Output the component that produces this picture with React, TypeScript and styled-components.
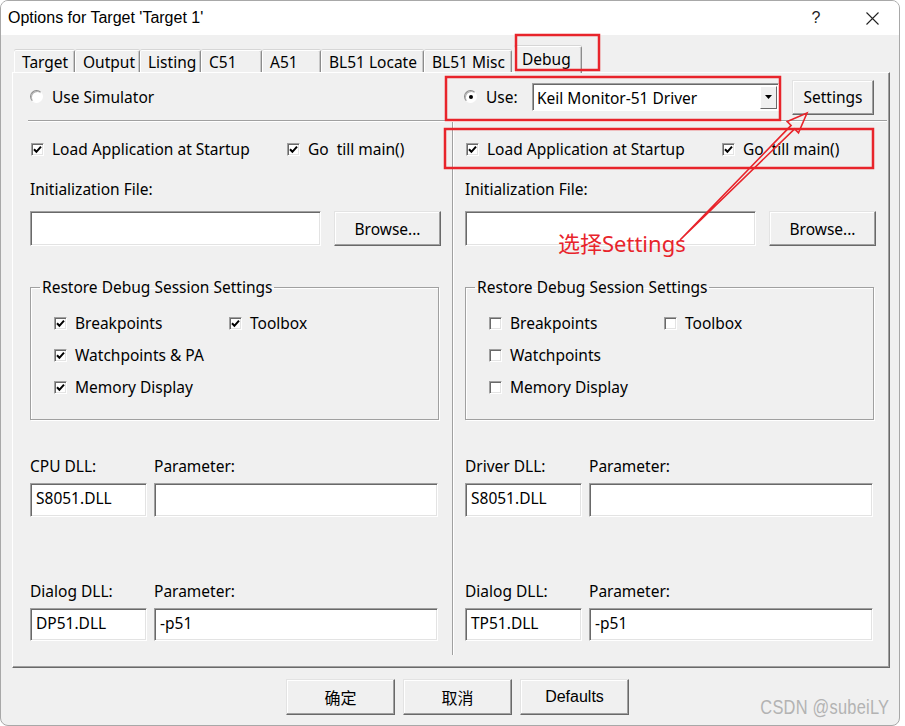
import React from "react";
import styled, { createGlobalStyle } from "styled-components";

const red = "#e8242b";

const GlobalStyle = createGlobalStyle`
  html, body { margin: 0; padding: 0; background: #ffffff; }
  body {
    font-family: "Noto Sans", "Noto Sans CJK SC", sans-serif;
    font-size: 15.5px;
    color: #000;
  }
  * { box-sizing: border-box; }
`;

const Window = styled.div`
  position: relative;
  width: 900px;
  height: 726px;
  border: 1px solid #a8a8a8;
  border-radius: 8px;
  overflow: hidden;
  background: #f0f0f0;
  display: flex;
  flex-direction: column;
`;

const TitleBar = styled.div`
  height: 34px;
  flex-shrink: 0;
  background: #fff;
  display: flex;
  align-items: center;
  padding: 0 4px 0 7px;
`;

const Title = styled.span`
  flex: 1;
  font-family: "Liberation Sans", sans-serif;
  font-size: 16px;
`;

const TitleButton = styled.span`
  width: 46px;
  height: 34px;
  display: flex;
  align-items: center;
  justify-content: center;
  font-family: "Liberation Sans", sans-serif;
  font-size: 16px;
  color: #222;
  & + & { margin-left: 10px; }
`;

const TabStrip = styled.div`
  height: 26px;
  margin: 11px 0 0 13px;
  display: flex;
  align-items: flex-end;
  position: relative;
  z-index: 1;
`;

const Tab = styled.div<{ $w: number; $active?: boolean }>`
  width: ${(p) => p.$w}px;
  height: ${(p) => (p.$active ? 27 : 22)}px;
  margin-left: ${(p) => (p.$active ? 2 : 0)}px;
  margin-bottom: ${(p) => (p.$active ? -1 : 0)}px;
  padding: ${(p) => (p.$active ? "0 0 3px 7px" : "0 0 0 7px")};
  display: flex;
  align-items: center;
  background: #f0f0f0;
  border-style: solid;
  border-width: 1px 1px 0 1px;
  border-color: #fff #8c8c8c transparent #fff;
  box-shadow: 0 -1px 0 #d6d6d6, inset -1px 0 0 #c9c9c9;
  border-radius: 2px 2px 0 0;
  white-space: nowrap;
`;

const Panel = styled.div`
  margin-left: 11px;
  width: 878px;
  height: 596px;
  flex-shrink: 0;
  border: 1px solid;
  border-color: #fff #696969 #696969 #fff;
  box-shadow: inset -1px -1px 0 #a0a0a0;
  padding: 0 15px 0 17px;
  display: flex;
  flex-direction: column;
`;

const Halves = styled.div`
  display: grid;
  grid-template-columns: 410px 25px 409px;
`;

const TopRow = styled(Halves)`
  height: 47px;
  align-items: center;
`;

const Separator = styled.div`
  height: 2px;
  margin: 0 -13px 0 -2px;
  border-top: 1px solid #a0a0a0;
  border-bottom: 1px solid #fff;
`;

const Columns = styled(Halves)`
  flex: 1;
`;

const Divider = styled.div`
  width: 2px;
  margin: 0 auto 12px;
  border-left: 1px solid #a0a0a0;
  border-right: 1px solid #fff;
`;

const Column = styled.div`
  display: flex;
  flex-direction: column;
`;

const Line = styled.div<{ $top: number }>`
  margin-top: ${(p) => p.$top}px;
  height: 20px;
  display: flex;
  align-items: center;
  white-space: pre;
`;

const CheckRow = styled(Line)`
  display: grid;
  grid-template-columns: 256px auto;
`;

const CheckLabel = styled.label`
  display: flex;
  align-items: center;
  gap: 8px;
  white-space: pre;
  margin-left: 1px;
`;

const CheckBox = styled.span`
  width: 13px;
  height: 13px;
  flex-shrink: 0;
  background: #fff;
  border: 1px solid;
  border-color: #a0a0a0 #fff #fff #a0a0a0;
  box-shadow: inset 1px 1px 0 #696969, inset -1px -1px 0 #e3e3e3;
  display: flex;
  align-items: center;
  justify-content: center;
`;

const RadioLabel = styled.label`
  display: flex;
  align-items: center;
  gap: 9px;
`;

const RadioDot = styled.span<{ $on?: boolean }>`
  width: 13px;
  height: 13px;
  border-radius: 50%;
  background: #fff;
  border: 1px solid;
  border-color: #8a8a8a #fff #fff #8a8a8a;
  box-shadow: inset 1px 1px 0 #b5b5b5;
  display: flex;
  align-items: center;
  justify-content: center;
  &::after {
    content: "";
    width: 4px;
    height: 4px;
    border-radius: 50%;
    background: ${(p) => (p.$on ? "#000" : "transparent")};
  }
`;

const UseRow = styled.div`
  display: flex;
  align-items: center;
  margin-left: -1px;
`;

const UseText = styled.span`
  width: 46px;
`;

const Combo = styled.div`
  width: 247px;
  height: 28px;
  background: #fff;
  border: 1px solid;
  border-color: #a0a0a0 #fff #fff #a0a0a0;
  box-shadow: inset 1px 1px 0 #696969;
  display: flex;
  align-items: center;
  padding: 2px 1px 1px 4px;
`;

const ComboText = styled.span`
  flex: 1;
  padding-top: 1px;
`;

const ComboArrow = styled.span`
  width: 17px;
  height: 100%;
  background: #f0f0f0;
  border: 1px solid;
  border-color: #fff #696969 #696969 #fff;
  display: flex;
  align-items: center;
  justify-content: center;
`;

const Button = styled.button<{ $w: number; $h: number }>`
  width: ${(p) => p.$w}px;
  height: ${(p) => p.$h}px;
  flex-shrink: 0;
  padding: 0;
  background: #f0f0f0;
  color: #000;
  font: inherit;
  border: 1px solid;
  border-color: #e3e3e3 #696969 #696969 #e3e3e3;
  box-shadow: inset -1px -1px 0 #a0a0a0, inset 1px 1px 0 #fff;
`;

const SettingsButton = styled(Button)`
  margin-left: 13px;
  margin-top: 1px;
`;

const TextBox = styled.div<{ $h: number }>`
  height: ${(p) => p.$h}px;
  background: #fff;
  border: 1px solid;
  border-color: #a0a0a0 #fff #fff #a0a0a0;
  box-shadow: inset 1px 1px 0 #696969, inset -1px -1px 0 #e3e3e3;
  padding: 3px 5px;
  white-space: nowrap;
`;

const BrowseRow = styled.div`
  margin-top: 12px;
  display: grid;
  grid-template-columns: 291px 107px;
  column-gap: 13px;
`;

const Group = styled.fieldset`
  margin: 31px 0 0;
  padding: 0;
  width: 409px;
  height: 143px;
  border: 1px solid #a0a0a0;
  box-shadow: 1px 1px 0 #fff, inset 1px 1px 0 #fff;
`;

const Legend = styled.legend`
  margin-left: 9px;
  padding: 0 2px;
  line-height: 20px;
`;

const GroupGrid = styled.div`
  display: grid;
  grid-template-columns: 175px auto;
  grid-auto-rows: 20px;
  row-gap: 12px;
  padding: 16px 0 0 22px;
`;

const DllGrid = styled.div<{ $top: number }>`
  margin-top: ${(p) => p.$top}px;
  display: grid;
  grid-template-columns: 117px 284px;
  grid-template-rows: 20px auto;
  column-gap: 7px;
  row-gap: 7px;
`;

const Label = styled.span`
  line-height: 20px;
  white-space: nowrap;
`;

const ButtonBar = styled.div`
  margin-top: 11px;
  padding-left: 15px;
  display: flex;
  justify-content: center;
  gap: 8px;
  font-family: "Liberation Sans", "Noto Sans CJK SC", sans-serif;
  font-size: 16px;
`;

const Overlay = styled.svg`
  position: absolute;
  left: -1px;
  top: -1px;
  pointer-events: none;
  z-index: 5;
`;

const Note = styled.span`
  position: absolute;
  left: 557px;
  top: 228px;
  color: ${red};
  font-family: "Noto Sans", "Noto Sans CJK SC", sans-serif;
  font-size: 22px;
  line-height: 28px;
  z-index: 6;
`;

const Watermark = styled.span`
  position: absolute;
  right: 10px;
  bottom: 6px;
  color: #b3b3b3;
  font-family: "Liberation Sans", sans-serif;
  font-size: 20px;
  transform: scaleX(0.82);
  transform-origin: right center;
  letter-spacing: 0.3px;
  z-index: 6;
`;

const tabs = [
  { label: "Target", w: 61 },
  { label: "Output", w: 65 },
  { label: "Listing", w: 61 },
  { label: "C51", w: 61 },
  { label: "A51", w: 59 },
  { label: "BL51 Locate", w: 103 },
  { label: "BL51 Misc", w: 88 },
  { label: "Debug", w: 68, active: true },
];

const Tick = () => (
  <svg width="9" height="9" viewBox="0 0 9 9">
    <path d="M1 4.3 L3.4 6.8 L8 1.6" fill="none" stroke="#000" strokeWidth="2" />
  </svg>
);

function Check({ checked, label }: { checked?: boolean; label: string }) {
  return (
    <CheckLabel>
      <CheckBox>{checked && <Tick />}</CheckBox>
      <span>{label}</span>
    </CheckLabel>
  );
}

type Side = {
  restore: boolean;
  watch: string;
  dllLabel: string;
  dll: string;
  dialogDll: string;
};

function DebugColumn({ side }: { side: Side }) {
  return (
    <Column>
      <CheckRow $top={16}>
        <Check checked label="Load Application at Startup" />
        <Check checked label="Go  till main()" />
      </CheckRow>
      <Line $top={21}>Initialization File:</Line>
      <BrowseRow>
        <TextBox $h={35} />
        <Button $w={107} $h={35}>Browse...</Button>
      </BrowseRow>
      <Group>
        <Legend>Restore Debug Session Settings</Legend>
        <GroupGrid>
          <Check checked={side.restore} label="Breakpoints" />
          <Check checked={side.restore} label="Toolbox" />
          <Check checked={side.restore} label={side.watch} />
          <span />
          <Check checked={side.restore} label="Memory Display" />
        </GroupGrid>
      </Group>
      <DllGrid $top={36}>
        <Label>{side.dllLabel}</Label>
        <Label>Parameter:</Label>
        <TextBox $h={34}>{side.dll}</TextBox>
        <TextBox $h={34} />
      </DllGrid>
      <DllGrid $top={64}>
        <Label>Dialog DLL:</Label>
        <Label>Parameter:</Label>
        <TextBox $h={33}>{side.dialogDll}</TextBox>
        <TextBox $h={33}>-p51</TextBox>
      </DllGrid>
    </Column>
  );
}

const simulator: Side = {
  restore: true,
  watch: "Watchpoints & PA",
  dllLabel: "CPU DLL:",
  dll: "S8051.DLL",
  dialogDll: "DP51.DLL",
};

const monitor: Side = {
  restore: false,
  watch: "Watchpoints",
  dllLabel: "Driver DLL:",
  dll: "S8051.DLL",
  dialogDll: "TP51.DLL",
};

export default function App() {
  return (
    <>
      <GlobalStyle />
      <Window>
        <TitleBar>
          <Title>Options for Target 'Target 1'</Title>
          <TitleButton>?</TitleButton>
          <TitleButton>
            <svg width="13" height="13" viewBox="0 0 13 13">
              <path d="M0.5 0.5 L12.5 12.5 M12.5 0.5 L0.5 12.5" stroke="#222" strokeWidth="1.1" />
            </svg>
          </TitleButton>
        </TitleBar>

        <TabStrip>
          {tabs.map((t) => (
            <Tab key={t.label} $w={t.w} $active={t.active}>
              {t.label}
            </Tab>
          ))}
        </TabStrip>

        <Panel>
          <TopRow>
            <RadioLabel>
              <RadioDot />
              <span>Use Simulator</span>
            </RadioLabel>
            <span />
            <UseRow>
              <RadioLabel>
                <RadioDot $on />
                <UseText>Use:</UseText>
              </RadioLabel>
              <Combo>
                <ComboText>Keil Monitor-51 Driver</ComboText>
                <ComboArrow>
                  <svg width="7" height="4" viewBox="0 0 7 4">
                    <path d="M0 0 H7 L3.5 4 Z" fill="#000" />
                  </svg>
                </ComboArrow>
              </Combo>
              <SettingsButton $w={82} $h={35}>Settings</SettingsButton>
            </UseRow>
          </TopRow>
          <Separator />
          <Columns>
            <DebugColumn side={simulator} />
            <Divider />
            <DebugColumn side={monitor} />
          </Columns>
        </Panel>

        <ButtonBar>
          <Button $w={109} $h={36}>确定</Button>
          <Button $w={109} $h={36}>取消</Button>
          <Button $w={109} $h={36}>Defaults</Button>
        </ButtonBar>

        <Overlay width="905" height="726" viewBox="0 0 905 726">
          <g fill="none" stroke={red} strokeWidth="2.5">
            <rect x="516" y="35" width="83" height="35" />
            <rect x="446" y="77" width="334" height="43" />
            <rect x="445" y="129" width="428" height="39" />
          </g>
          <polygon
            points="680,240 794.6,128.9 798.5,132.8 807,113 787.2,121.5 791.1,125.4"
            fill="none"
            stroke={red}
            strokeWidth="1.6"
            strokeLinejoin="miter"
          />
        </Overlay>
        <Note>选择Settings</Note>
        <Watermark>CSDN @subeiLY</Watermark>
      </Window>
    </>
  );
}
